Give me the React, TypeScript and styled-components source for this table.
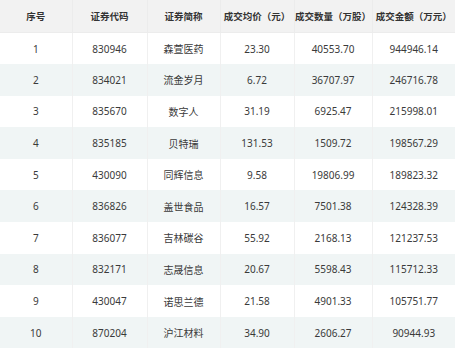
import React from 'react'
import styled, { createGlobalStyle } from 'styled-components'

const GlobalStyle = createGlobalStyle`
  body {
    margin: 0;
    background: #ffffff;
    font-family: "Noto Sans", "Noto Sans CJK SC", sans-serif;
  }
`

const Table = styled.table`
  width: 455px;
  border-collapse: collapse;
  table-layout: fixed;
  font-size: 10px;
  color: #3a3a3a;
`

const HeadCell = styled.th`
  height: 32px;
  padding: 0;
  background: #f2f2f2;
  font-size: 9.5px;
  font-weight: 600;
  color: #333333;
  text-align: center;
  white-space: nowrap;
  border-left: 1px solid #ececec;
  border-bottom: 1px solid #ececec;
  &:first-child {
    border-left: none;
  }
`

const Row = styled.tr<{ $striped: boolean }>`
  height: 31.6px;
  background: ${({ $striped }) => ($striped ? '#f0f5f5' : '#ffffff')};
`

const Cell = styled.td`
  padding: 0;
  text-align: center;
  white-space: nowrap;
  border-left: 1px solid #f0f0f0;
  &:first-child {
    border-left: none;
  }
`

const columns = [
  { title: '序号', width: 72 },
  { title: '证券代码', width: 75 },
  { title: '证券简称', width: 73 },
  { title: '成交均价（元）', width: 74 },
  { title: '成交数量（万股）', width: 78 },
  { title: '成交金额（万元）', width: 83 },
]

const rows = [
  ['1', '830946', '森萱医药', '23.30', '40553.70', '944946.14'],
  ['2', '834021', '流金岁月', '6.72', '36707.97', '246716.78'],
  ['3', '835670', '数字人', '31.19', '6925.47', '215998.01'],
  ['4', '835185', '贝特瑞', '131.53', '1509.72', '198567.29'],
  ['5', '430090', '同辉信息', '9.58', '19806.99', '189823.32'],
  ['6', '836826', '盖世食品', '16.57', '7501.38', '124328.39'],
  ['7', '836077', '吉林碳谷', '55.92', '2168.13', '121237.53'],
  ['8', '832171', '志晟信息', '20.67', '5598.43', '115712.33'],
  ['9', '430047', '诺思兰德', '21.58', '4901.33', '105751.77'],
  ['10', '870204', '沪江材料', '34.90', '2606.27', '90944.93'],
]

const App = () => {
  return (
    <>
      <GlobalStyle />
      <Table>
        <colgroup>
          {columns.map((c) => (
            <col key={c.title} style={{ width: c.width }} />
          ))}
        </colgroup>
        <thead>
          <tr>
            {columns.map((c) => (
              <HeadCell key={c.title}>{c.title}</HeadCell>
            ))}
          </tr>
        </thead>
        <tbody>
          {rows.map((r, i) => (
            <Row key={r[0]} $striped={i % 2 === 1}>
              {r.map((v, j) => (
                <Cell key={j}>{v}</Cell>
              ))}
            </Row>
          ))}
        </tbody>
      </Table>
    </>
  )
}

export default App
